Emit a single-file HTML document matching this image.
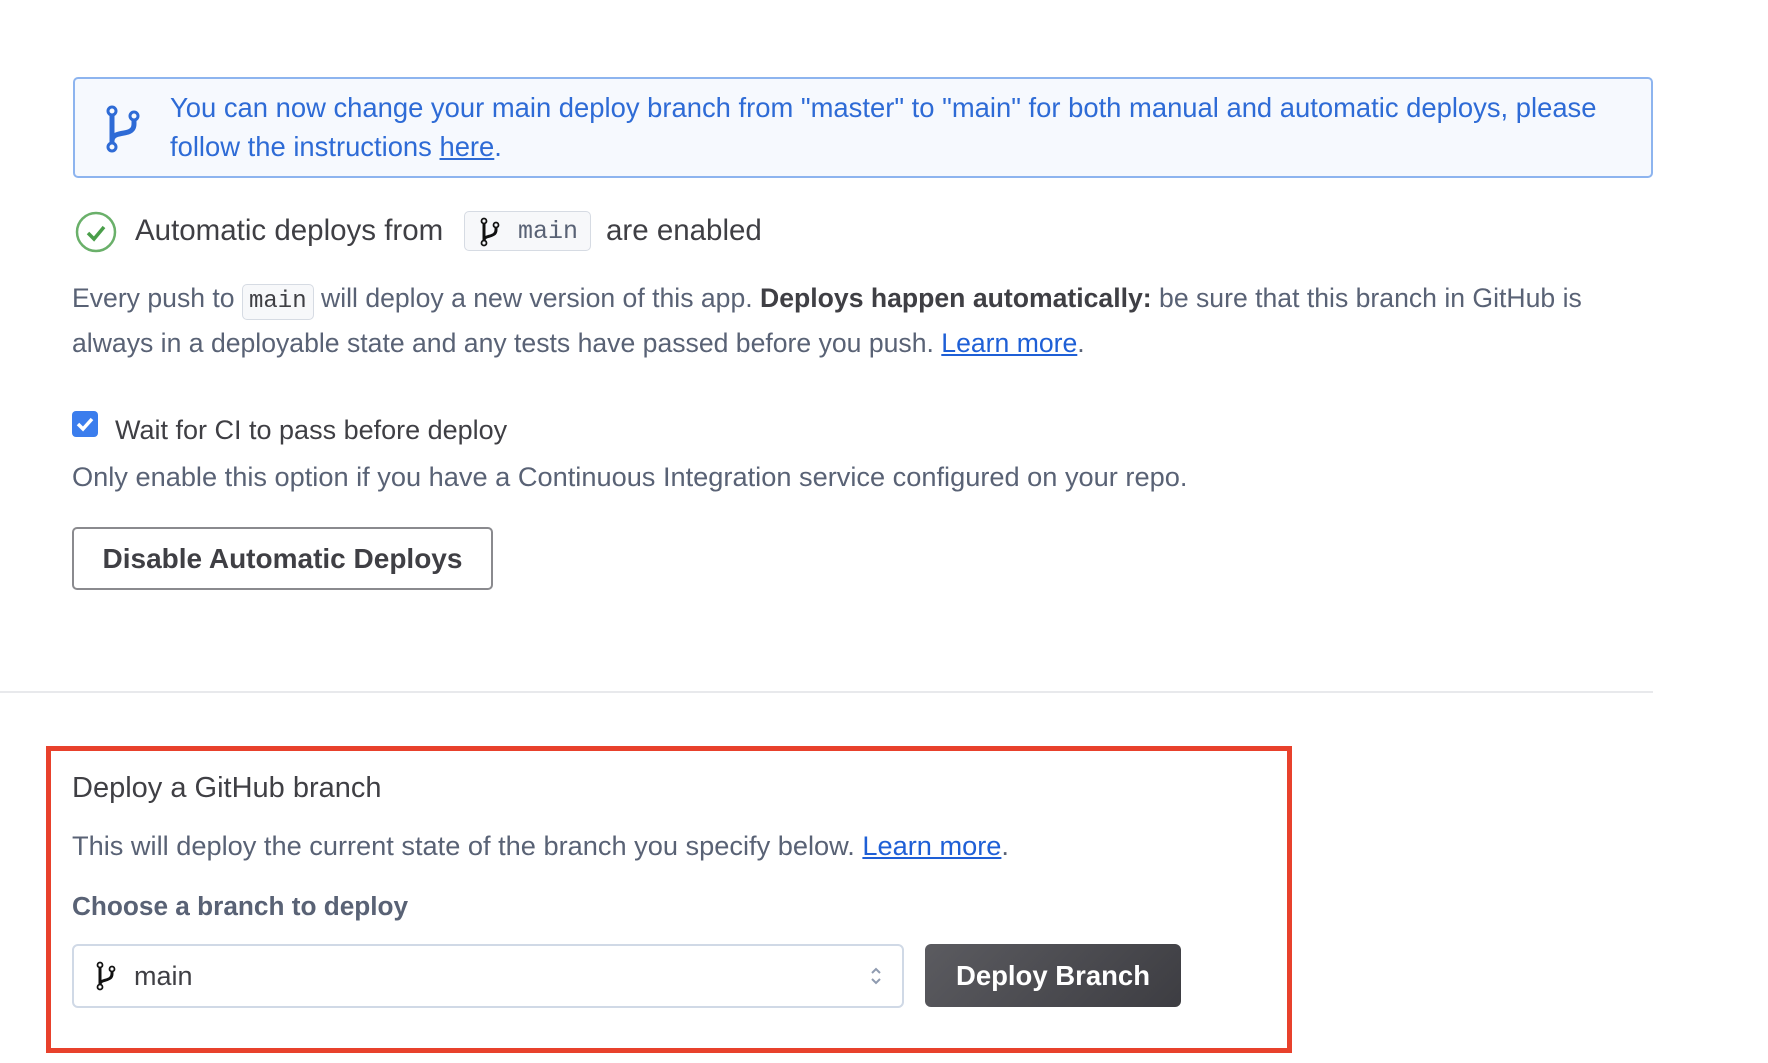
<!DOCTYPE html>
<html><head><meta charset="utf-8"><style>
*{margin:0;padding:0;box-sizing:border-box}
body{width:1768px;height:1063px;background:#fff;position:relative;overflow:hidden;font-family:"Liberation Sans",sans-serif;color:#3f3f44}
.a{position:absolute;white-space:nowrap}
a{color:#1e5fd6;text-decoration:underline}
code{font-family:"Liberation Mono",monospace}
</style></head><body>
<div class="a" style="left:73px;top:77px;width:1580px;height:101px;border:2px solid #8db4ef;border-radius:5px;background:#f6f9fe"></div>
<svg class="a" style="left:104px;top:103px" width="40" height="52" viewBox="0 0 40 52"><g fill="none" stroke="#2e6bd6" stroke-width="3"><circle cx="8" cy="8" r="4"/><circle cx="30" cy="13" r="4"/><circle cx="8" cy="44" r="4"/></g><path d="M8 12V40M30 17v4c0 6-4 8-10 9-6 1-12 2-12 8" fill="none" stroke="#2e6bd6" stroke-width="5"/></svg>
<div class="a" style="left:170px;top:88px;font-size:27.4px;line-height:39px;color:#2e6bd6">You can now change your main deploy branch from "master" to "main" for both manual and automatic deploys, please<br>follow the instructions <a href="#" style="color:#2e6bd6">here</a>.</div>

<svg class="a" style="left:75px;top:211px" width="42" height="42" viewBox="0 0 42 42"><circle cx="21" cy="21" r="19" fill="none" stroke="#6ab06a" stroke-width="2.5"/><path d="M13 22l6 6 10-12" fill="none" stroke="#4a9e4a" stroke-width="3.5"/></svg>
<div class="a" style="left:135px;top:214px;font-size:29.5px;line-height:34px;color:#3f3f44">Automatic deploys from</div>
<div class="a" style="left:464px;top:211px;width:127px;height:40px;border:1.5px solid #d6dbe3;border-radius:5px;background:#f7f8fa"></div>
<svg class="a" style="left:480px;top:217px" width="22" height="30" viewBox="0 0 22 30"><g fill="none" stroke="#111" stroke-width="1.8"><circle cx="4" cy="4" r="2.5"/><circle cx="16" cy="8" r="2.5"/><circle cx="4" cy="26" r="2.5"/></g><path d="M4 7v16M16 11v2c0 4-3 5-6 6s-6 1-6 5" fill="none" stroke="#111" stroke-width="3"/></svg>
<div class="a" style="left:518px;top:217px;font-size:25px;line-height:30px;font-family:'Liberation Mono',monospace;color:#596275">main</div>
<div class="a" style="left:606px;top:214px;font-size:29.5px;line-height:34px">are enabled</div>

<div class="a" style="left:72px;top:276px;font-size:26.6px;line-height:45px;color:#596275">Every push to <code style="display:inline-block;border:1.5px solid #d6dbe3;border-radius:5px;background:#f7f8fa;padding:0 6px;line-height:34px;color:#3f3f44;font-size:24px">main</code> will deploy a new version of this app. <b style="color:#3f3f44">Deploys happen automatically:</b> be sure that this branch in GitHub is<br>always in a deployable state and any tests have passed before you push. <a href="#">Learn more</a>.</div>

<div class="a" style="left:72px;top:411px;width:26px;height:26px;background:#3b7ded;border-radius:4px"></div>
<svg class="a" style="left:72px;top:411px" width="26" height="26" viewBox="0 0 26 26"><path d="M6 13l5 5 9-10" fill="none" stroke="#fff" stroke-width="3.5"/></svg>
<div class="a" style="left:115px;top:414px;font-size:27px;line-height:32px">Wait for CI to pass before deploy</div>
<div class="a" style="left:72px;top:461px;font-size:27.2px;line-height:32px;color:#596275">Only enable this option if you have a Continuous Integration service configured on your repo.</div>

<div class="a" style="left:72px;top:527px;width:421px;height:63px;border:2px solid #8a8a8e;border-radius:5px;font-size:28px;font-weight:bold;line-height:59px;text-align:center;color:#3f3f44">Disable Automatic Deploys</div>

<div class="a" style="left:0;top:691px;width:1653px;height:2px;background:#e8e9ec"></div>

<div class="a" style="left:46px;top:746px;width:1246px;height:307px;border:5px solid #e8412c"></div>
<div class="a" style="left:72px;top:771px;font-size:29px;line-height:34px;color:#3f3f44">Deploy a GitHub branch</div>
<div class="a" style="left:72px;top:830px;font-size:27.2px;line-height:32px;color:#596275">This will deploy the current state of the branch you specify below. <a href="#">Learn more</a>.</div>
<div class="a" style="left:72px;top:890px;font-size:26.2px;line-height:32px;font-weight:bold;color:#596275">Choose a branch to deploy</div>
<div class="a" style="left:72px;top:944px;width:832px;height:64px;border:2px solid #d0d9e6;border-radius:6px;background:#fff"></div>
<svg class="a" style="left:96px;top:961px" width="22" height="30" viewBox="0 0 22 30"><g fill="none" stroke="#111" stroke-width="1.8"><circle cx="4" cy="4" r="2.5"/><circle cx="16" cy="8" r="2.5"/><circle cx="4" cy="26" r="2.5"/></g><path d="M4 7v16M16 11v2c0 4-3 5-6 6s-6 1-6 5" fill="none" stroke="#111" stroke-width="3"/></svg>
<div class="a" style="left:134px;top:960px;font-size:27px;line-height:32px;color:#3f3f44">main</div>
<svg class="a" style="left:869px;top:964px" width="14" height="24" viewBox="0 0 14 24"><path d="M3 9l4-4 4 4M3 15l4 4 4-4" fill="none" stroke="#8f9bb0" stroke-width="2"/></svg>
<div class="a" style="left:925px;top:944px;width:256px;height:63px;border-radius:6px;background:linear-gradient(135deg,#5b5b60,#3d3d42);color:#fff;font-size:27.5px;font-weight:bold;line-height:63px;text-align:center">Deploy Branch</div>
</body></html>
